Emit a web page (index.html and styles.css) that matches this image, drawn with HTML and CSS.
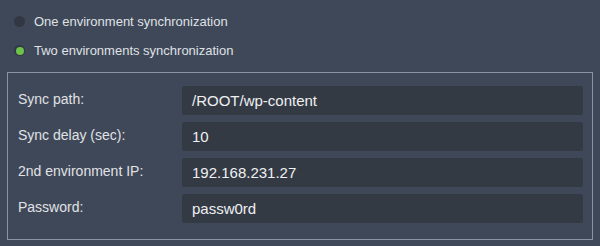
FILE: index.html
```html
<!DOCTYPE html>
<html lang="en">
<head>
  <meta charset="UTF-8" />
  <title>Sync settings</title>
  <link rel="stylesheet" href="styles.css">
</head>
<body>
  <div class="panel">
    <div class="modes">
      <label class="mode">
        <span class="radio"></span>
        One environment synchronization
      </label>
      <label class="mode">
        <span class="radio checked"></span>
        Two environments synchronization
      </label>
    </div>

    <div class="box">
      <div class="row">
        <span class="label">Sync path:</span>
        <div class="field">/ROOT/wp-content</div>
      </div>
      <div class="row">
        <span class="label">Sync delay (sec):</span>
        <div class="field">10</div>
      </div>
      <div class="row">
        <span class="label">2nd environment IP:</span>
        <div class="field">192.168.231.27</div>
      </div>
      <div class="row">
        <span class="label">Password:</span>
        <div class="field">passw0rd</div>
      </div>
    </div>
  </div>
</body>
</html>
```

FILE: styles.css
```css
* { box-sizing: border-box; margin: 0; padding: 0; }
body {
  font-family: "Liberation Sans", Arial, sans-serif;
  background: #3f4858;
  color: #e2e4e8;
}
.panel {
  padding: 7px 7px 0;
}
.modes {
  display: flex;
  flex-direction: column;
}
.mode {
  display: flex;
  align-items: center;
  height: 29px;
  padding-left: 7px;
  gap: 9px;
  font-size: 13px;
  color: #dfe1e5;
}
.radio {
  width: 11px;
  height: 11px;
  border-radius: 50%;
  background: #323743;
  display: flex;
  align-items: center;
  justify-content: center;
}
.radio.checked::after {
  content: "";
  width: 8px;
  height: 8px;
  border-radius: 50%;
  background: #6cc24a;
}
.box {
  margin-top: 7px;
  border: 1px solid #8a93a4;
  padding: 13px 9px 16px 10px;
  display: flex;
  flex-direction: column;
  gap: 7px;
}
.row {
  display: flex;
  align-items: center;
  height: 29px;
}
.label {
  width: 164px;
  flex-shrink: 0;
  font-size: 14px;
  color: #e0e2e6;
  padding-bottom: 3px;
}
.field {
  flex: 1;
  height: 29px;
  line-height: 29px;
  padding-left: 10px;
  background: #343a44;
  border-radius: 2px;
  font-size: 15px;
  color: #eef0f2;
}
```
